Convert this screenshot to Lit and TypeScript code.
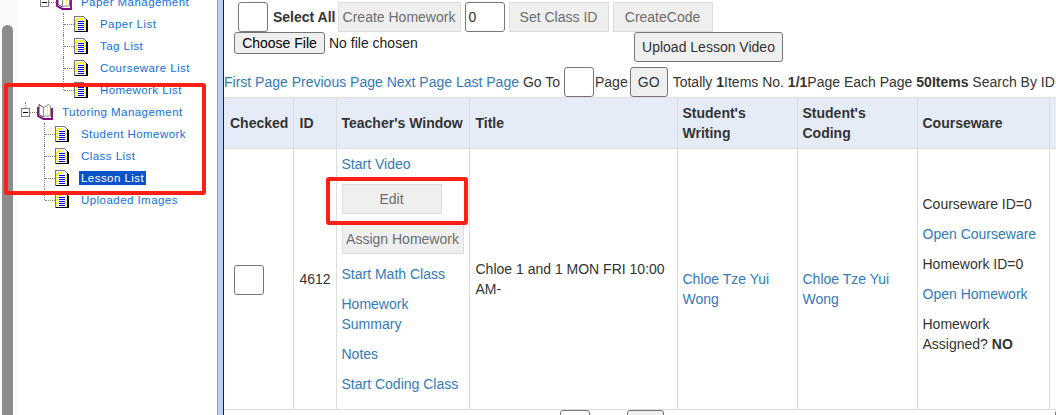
import { LitElement, html, css } from "lit";
import { customElement } from "lit/decorators.js";

const bookIcon = html`<svg class="book" width="16" height="16" viewBox="0 0 16 16">
  <path d="M1 3 V12 L6.5 15 H15 V4" fill="#fff" stroke="#800080" stroke-width="1.8"/>
  <path d="M2 0.5 L6.5 3.5 V13 L2 10.5 Z" fill="#fff" stroke="#444" stroke-width="1"/>
  <path d="M6.5 3.5 L11.5 0.5 L13.5 2 V12 H8 L6.5 13 Z" fill="#fff" stroke="#888" stroke-width="1"/>
  <path d="M10.5 3.5 V10" stroke="#f0e800" stroke-width="1.4" stroke-dasharray="1.5 1"/>
</svg>`;

const pageIcon = html`<svg class="page" width="14" height="16" viewBox="0 0 14 16" shape-rendering="crispEdges">
  <path d="M0.5 0.5 H9.5 L12.5 3.5 V15 H0.5 Z" fill="#fff" stroke="#777" stroke-width="1"/>
  <path d="M12.5 3 V15.5 H1" fill="none" stroke="#000" stroke-width="1"/>
  <path d="M13.5 4 V15.5" stroke="#000" stroke-width="1"/>
  <path d="M2 2.5 H9" stroke="#ffee00" stroke-width="2" stroke-dasharray="2 1"/>
  <path d="M2 4 V14 M11 4 V14" stroke="#ffee00" stroke-width="2" stroke-dasharray="2 1"/>
  <path d="M3.5 5.5 H10 M3.5 7.5 H10 M3.5 9.5 H10 M3.5 11.5 H10 M3.5 13.5 H10" stroke="#0000e0" stroke-width="1"/>
</svg>`;

@customElement("app-root")
export class AppRoot extends LitElement {
  static styles = css`
    :host { display: block; width: 1056px; height: 415px; overflow: hidden; position: relative; background: #fff;
      font-family: "Liberation Sans", Arial, sans-serif; font-size: 14px; line-height: 20px; color: #333; }
    * { box-sizing: border-box; }
    .shell { display: flex; height: 415px; }

    .side { width: 217px; flex: none; position: relative; overflow: hidden; background: #fff; }
    .track { position: absolute; left: 0; top: 0; bottom: 0; width: 17px; background: #fafafa; }
    .thumb { position: absolute; left: 2px; top: 25px; width: 11px; height: 400px; background: #8c8c8c; border-radius: 6px; }
    .tree { position: relative; margin-top: -9px; padding-left: 21px; font-size: 11.5px; letter-spacing: 0.45px; color: #0f6fe0; }
    .row { height: 22px; display: flex; align-items: center; white-space: nowrap; }
    .head1 { padding-left: 19px; }
    .sub1 { padding-left: 42px; }
    .sub2 { padding-left: 23px; }
    .toggle { width: 9px; height: 9px; border: 1px solid #808080; background: #fff; position: relative; flex: none; }
    .toggle::after { content: ""; position: absolute; left: 1px; right: 1px; top: 3px; height: 1px; background: #000; }
    .up::before { content: ""; position: absolute; left: 3px; top: -7px; height: 6px; border-left: 1px dotted #808080; }
    .dash { width: 10px; border-top: 1px dotted #808080; flex: none; }
    .dash.s { width: 7px; }
    .stem { align-self: stretch; width: 1px; border-left: 1px dotted #808080; flex: none; margin-right: -1px; }
    .last .stem { align-self: flex-start; height: 11px; }
    .stem + .dash { margin-left: 1px; }
    .book, .page { flex: none; }
    .lbl { padding: 0 2px; margin-left: 10px; line-height: 14px; }
    .lbl.hd { margin-left: 7px; }
    .sel { background: #0a52c8; color: #fff; }

    .divider { width: 7px; flex: none; background: #b9d0f2; border-left: 1px solid #a3a3a3; border-right: 1px solid #14205e; }
    .main { flex: 1; min-width: 0; position: relative; overflow: hidden; }

    .toolbar { display: flex; align-items: center; height: 32px; padding: 2px 0 0 14px; }
    .box { display: block; width: 30px; height: 30px; border: 1px solid #767676; border-radius: 3px; background: #fff; flex: none; }
    .selall { font-weight: 700; color: #333; margin-left: 5px; margin-right: 2px; }
    .dis { height: 30px; border: 1px solid #ddd; background: #efefef; color: #6d6d6d; font: 14px "Liberation Sans", Arial, sans-serif; padding: 0; flex: none; width: 100px; }
    .wide { width: 123px; }
    .next { margin-left: 4px; }
    .num { width: 40px; height: 30px; border: 1px solid #767676; border-radius: 3px; margin: 0 4px; padding-left: 3px; font-size: 14px; line-height: 28px; color: #333; flex: none; }
    .filerow { display: flex; height: 35px; padding-left: 10px; align-items: flex-start; }
    .choose { height: 22px; width: 91px; border: 1px solid #767676; border-radius: 3px; background: #efefef; color: #000; font: 14px "Liberation Sans", Arial, sans-serif; padding: 0; flex: none; }
    .nofile { color: #222; margin-left: 4px; line-height: 22px; width: 305px; flex: none; }
    .upload { height: 30px; width: 149px; border: 1px solid #767676; border-radius: 3px; background: #efefef; color: #333; font: 14px "Liberation Sans", Arial, sans-serif; padding: 0; flex: none; }
    .pager { display: flex; align-items: center; height: 30px; white-space: nowrap; width: 900px; }
    .pager a { margin-right: 3.9px; }
    a { color: #337ab7; text-decoration: none; }
    .small { width: 30px; height: 30px; border: 1px solid #767676; border-radius: 3px; background: #fff; margin: 0 1px 0 4px; flex: none; }
    .go { width: 38px; height: 30px; border: 1px solid #767676; border-radius: 3px; background: #efefef; color: #333; font: 14px "Liberation Sans", Arial, sans-serif; padding: 0; margin: 0 5px 0 2px; flex: none; }

    table { border-collapse: collapse; table-layout: fixed; width: 840px; }
    .c1 { width: 69px; } .c2 { width: 43px; } .c3 { width: 133px; } .c4 { width: 208px; }
    .c5, .c6 { width: 120px; } .c7 { width: 132px; } .c8 { width: 15px; }
    th, td { border: 1px solid #ddd; padding: 5px 4px 5px 5px; vertical-align: middle; text-align: left; }
    th { background: #e6ecf7; font-weight: 700; height: 50px; }
    td { height: 260px; }
    .first { border-left: none; padding-left: 6px; }
    td.first { padding-left: 10px; }
    td.first .box { margin-top: 1px; }
    .pad6 { padding-left: 6px; }
    .nowrap { white-space: nowrap; }
    .stack { display: flex; flex-direction: column; align-items: flex-start; padding-bottom: 10px; }
    .stack p { margin: 0; }
    .stack .gap { margin-top: 10px; }
    .edit { width: 100px; height: 30px; margin-top: 10px; border: 1px solid #ddd; background: #efefef; color: #6d6d6d; font: 14px "Liberation Sans", Arial, sans-serif; padding: 0; }
    .assign { width: 122px; height: 30px; margin-top: 10px; border: 1px solid #ddd; background: #efefef; color: #6d6d6d; font: 14px "Liberation Sans", Arial, sans-serif; padding: 0; }
    .down { display: block; padding-top: 20px; }
    .bottom { display: flex; height: 10px; padding-left: 336px; }
    .b1 { width: 30px; height: 30px; border: 1px solid #767676; border-radius: 3px; background: #fff; flex: none; }
    .b2 { width: 37px; height: 30px; border: 1px solid #767676; border-radius: 3px; background: #efefef; margin-left: 37px; flex: none; }
    .b3 { width: 30px; height: 30px; border: 1px solid #767676; border-radius: 3px; background: #fff; margin-left: 391px; flex: none; }

    .mark { position: absolute; border: 4px solid #ff2015; border-radius: 3px; pointer-events: none; }
    .m1 { left: 4px; top: 83px; width: 202px; height: 112px; }
    .m2 { left: 326px; top: 177px; width: 142px; height: 48px; }
  `;

  render() {
    const sub1 = ["Paper List", "Tag List", "Courseware List", "Homework List"];
    return html`
      <div class="shell">
        <aside class="side">
          <div class="track"></div>
          <div class="thumb"></div>
          <div class="tree">
            <div class="row head1"><span class="toggle"></span><span class="dash s"></span>${bookIcon}<span class="lbl hd">Paper Management</span></div>
            ${sub1.map(
              (t, i) => html`<div class="row sub1 ${i === sub1.length - 1 ? "last" : ""}"><span class="stem"></span><span class="dash"></span>${pageIcon}<span class="lbl">${t}</span></div>`
            )}
            <div class="row"><span class="toggle up"></span><span class="dash s"></span>${bookIcon}<span class="lbl hd">Tutoring Management</span></div>
            <div class="row sub2"><span class="stem"></span><span class="dash"></span>${pageIcon}<span class="lbl">Student Homework</span></div>
            <div class="row sub2"><span class="stem"></span><span class="dash"></span>${pageIcon}<span class="lbl">Class List</span></div>
            <div class="row sub2"><span class="stem"></span><span class="dash"></span>${pageIcon}<span class="lbl sel">Lesson List</span></div>
            <div class="row sub2 last"><span class="stem"></span><span class="dash"></span>${pageIcon}<span class="lbl">Uploaded Images</span></div>
          </div>
        </aside>
        <div class="divider"></div>
        <main class="main">
          <div class="toolbar">
            <span class="box"></span>
            <span class="selall">Select All</span>
            <button class="dis wide">Create Homework</button>
            <span class="num">0</span>
            <button class="dis">Set Class ID</button>
            <button class="dis next">CreateCode</button>
          </div>
          <div class="filerow">
            <button class="choose">Choose File</button>
            <span class="nofile">No file chosen</span>
            <button class="upload">Upload Lesson Video</button>
          </div>
          <div class="pager">
            <a href="#">First Page</a><a href="#">Previous Page</a><a href="#">Next Page</a><a href="#">Last Page</a>
            <span>Go To</span><span class="small"></span><span>Page</span><button class="go">GO</button>
            <span>Totally <b>1</b>Items No. <b>1/1</b>Page Each Page <b>50Items</b> Search By ID</span>
          </div>
          <table>
            <colgroup>
              <col class="c1" /><col class="c2" /><col class="c3" /><col class="c4" />
              <col class="c5" /><col class="c6" /><col class="c7" /><col class="c8" />
            </colgroup>
            <thead>
              <tr>
                <th class="first">Checked</th><th class="pad6">ID</th><th class="nowrap">Teacher's Window</th><th class="pad6">Title</th>
                <th>Student's Writing</th><th>Student's Coding</th><th>Courseware</th><th></th>
              </tr>
            </thead>
            <tbody>
              <tr>
                <td class="first"><span class="box"></span></td>
                <td class="pad6">4612</td>
                <td>
                  <div class="stack">
                    <a href="#">Start Video</a>
                    <button class="edit">Edit</button>
                    <button class="assign">Assign Homework</button>
                    <a href="#" class="gap">Start Math Class</a>
                    <a href="#" class="gap">Homework Summary</a>
                    <a href="#" class="gap">Notes</a>
                    <a href="#" class="gap">Start Coding Class</a>
                  </div>
                </td>
                <td class="pad6">Chloe 1 and 1 MON FRI 10:00 AM-</td>
                <td><a href="#" class="down">Chloe Tze Yui Wong</a></td>
                <td><a href="#" class="down">Chloe Tze Yui Wong</a></td>
                <td>
                  <div class="stack">
                    <p>Courseware ID=0</p>
                    <a href="#" class="gap">Open Courseware</a>
                    <p class="gap">Homework ID=0</p>
                    <a href="#" class="gap">Open Homework</a>
                    <p class="gap">Homework Assigned? <b>NO</b></p>
                  </div>
                </td>
                <td></td>
              </tr>
            </tbody>
          </table>
          <div class="bottom"><span class="b1"></span><span class="b2"></span><span class="b3"></span></div>
        </main>
      </div>
      <div class="mark m1"></div>
      <div class="mark m2"></div>
    `;
  }
}
